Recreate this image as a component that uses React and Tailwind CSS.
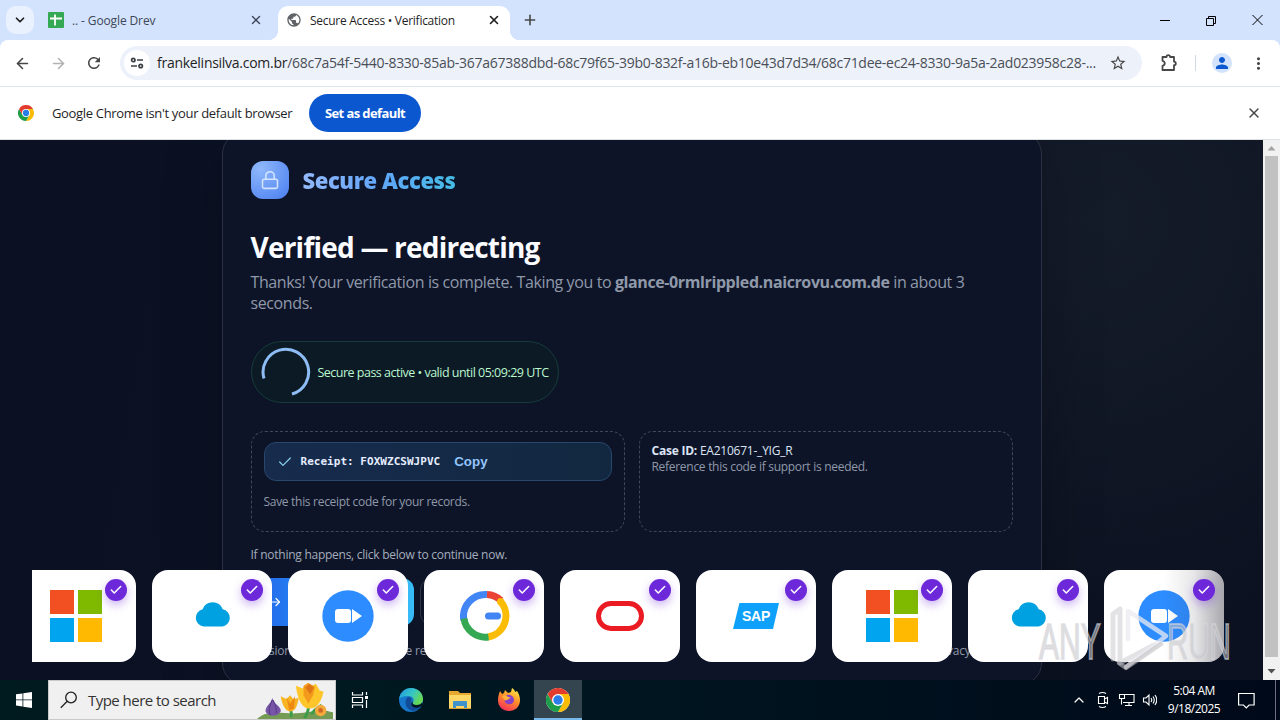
import {
  ArrowLeft,
  ArrowRight,
  Check,
  ChevronDown,
  ChevronUp,
  Lock,
  Plus,
  X,
} from "lucide-react";
import { MdRefresh, MdStarOutline, MdPublic, MdPerson, MdMoreVert } from "react-icons/md";

const cx = (...c) => c.filter(Boolean).join(" ");

function ChromeLogo({ className }) {
  return (
    <svg viewBox="0 0 48 48" className={className}>
      <circle cx="24" cy="24" r="24" fill="#fff" />
      <path d="M24 12H44.8A24 24 0 0 1 24 48L34.4 30Z" fill="#fbbc04" />
      <path d="M3.2 12 13.6 30 34.4 30 24 48A24 24 0 0 1 3.2 12Z" fill="#1e9e4a" />
      <path d="M3.2 12A24 24 0 0 1 44.8 12H24L13.6 30Z" fill="#e33b2e" />
      <circle cx="24" cy="24" r="12" fill="#fff" />
      <circle cx="24" cy="24" r="9.4" fill="#2b7de9" />
    </svg>
  );
}

function TabStrip() {
  return (
    <div className="flex h-10 shrink-0 bg-[#d3e3fd]">
      <div className="mt-1.5 ml-1.5 flex h-7 w-7 items-center justify-center rounded-[10px] bg-[#e9f1fe]">
        <ChevronDown className="h-3.5 w-3.5 text-[#1f1f1f]" strokeWidth={3} />
      </div>
      <div className="flex h-10 w-[230px] items-center pl-3.5">
        <svg viewBox="0 0 16 16" className="h-4 w-4">
          <rect width="16" height="16" rx="1" fill="#34a853" />
          <path d="M7 2.5v11M2 6.5h12" stroke="#fff" strokeWidth="1.8" />
        </svg>
        <span className="ml-2 w-[177px] pt-0.5 text-xs tracking-[-0.12px] text-[#3f4756]">.. - Google Drev</span>
        <X className="h-3.5 w-3.5 text-[#3c4657]" strokeWidth={2.4} />
      </div>
      <div className="relative ml-[14px] flex h-[34px] w-[232px] self-end rounded-t-[10px] bg-white pl-2">
        <div className="absolute bottom-0 -left-2.5 h-2.5 w-2.5 bg-[radial-gradient(circle_at_0_0,#d3e3fd_10px,#fff_10.5px)]" />
        <div className="absolute -right-2.5 bottom-0 h-2.5 w-2.5 bg-[radial-gradient(circle_at_100%_0,#d3e3fd_10px,#fff_10.5px)]" />
        <div className="flex h-7 items-center">
          <MdPublic className="h-4 w-4 text-[#5f6368]" />
          <span className="ml-2 w-[177px] pt-0.5 text-xs tracking-[-0.27px] text-[#1f1f1f]">
            Secure Access • Verification
          </span>
          <X className="h-3.5 w-3.5 text-[#1f1f1f]" strokeWidth={2.8} />
        </div>
      </div>
      <div className="ml-3 flex h-10 items-center">
        <Plus className="h-4 w-4 text-[#474747]" strokeWidth={2.4} />
      </div>
      <div className="ml-auto flex h-10 items-center pr-[15px] text-black">
        <svg viewBox="0 0 110 12" className="h-3 w-[110px]" fill="none" stroke="currentColor">
          <path d="M5 6.5h10" />
          <path d="M51.500 4.500h7v7h-7zM53.500 4.500v-2h7v7h-2M97.500 1l10 10M107.500 1l-10 10" />
        </svg>
      </div>
    </div>
  );
}

function Toolbar() {
  return (
    <div className="h-[47px] shrink-0 bg-[#d3e3fd]">
      <div className="flex h-[47px] items-center rounded-t-lg border-b border-[#dfe3ea] bg-white text-[#474747]">
        <ArrowLeft className="ml-[14px] h-[17px] w-[17px]" strokeWidth={2.3} />
        <ArrowRight className="ml-[19px] h-[17px] w-[17px] text-[#b3b3b3]" strokeWidth={2.3} />
        <MdRefresh className="ml-[18px] h-[18px] w-[18px]" />
        <div className="ml-[17px] flex h-[34px] w-[1022px] items-center rounded-full bg-[#edf1fa] pl-1">
          <div className="flex h-[26px] w-[26px] shrink-0 items-center justify-center rounded-full bg-white">
            <svg viewBox="0 0 14 12" className="h-3 w-3.5" fill="none" stroke="#3c4043" strokeWidth="1.7">
              <circle cx="3.300" cy="3" r="1.700" />
              <path d="M7 3h6M1 9h6" />
              <circle cx="10.700" cy="9" r="1.700" />
            </svg>
          </div>
          <span className="ml-[7px] w-[952px] shrink-0 text-sm tracking-[-0.275px] whitespace-nowrap text-[#4a4f57]">
            <span className="text-[#1f1f1f]">frankelinsilva.com.br</span>
            /68c7a54f-5440-8330-85ab-367a67388dbd-68c79f65-39b0-832f-a16b-eb10e43d7d34/68c71dee-ec24-8330-9a5a-2ad023958c28-...
          </span>
          <MdStarOutline className="h-[18px] w-[18px] shrink-0" />
        </div>
        <svg viewBox="0 0 20 20" className="ml-[17px] h-5 w-5" fill="none" stroke="currentColor" strokeWidth="1.8" strokeLinejoin="round">
          <path d="M3.500 4H7.500a1.800 1.800 0 0 1 3.600 0H15v4.600a1.800 1.800 0 0 1 0 3.600V17H3.500v-4.200c3-.6 3-4.400 0-5Z" />
        </svg>
        <div className="ml-4 h-4 w-px bg-[#cfd8e6]" />
        <div className="ml-4 flex h-5 w-5 items-center justify-center rounded-full bg-[#d3e3fd]">
          <MdPerson className="h-[18px] w-[18px] text-[#0b57d0]" />
        </div>
        <MdMoreVert className="ml-[17px] h-[19px] w-[19px]" />
      </div>
    </div>
  );
}

function InfoBar() {
  return (
    <div className="flex h-[53px] shrink-0 items-center border-b border-[#dce1e6] bg-white pl-[18px]">
      <ChromeLogo className="h-4 w-4" />
      <span className="ml-[18px] w-[257px] pt-0.5 text-[13px] tracking-[-0.33px] whitespace-nowrap text-[#1f1f1f]">
        Google Chrome isn't your default browser
      </span>
      <button className="h-[38px] w-28 rounded-full bg-[#0b57d0] pt-px text-[13px] font-bold tracking-[-0.6px] whitespace-nowrap text-white">
        Set as default
      </button>
      <X className="mr-[18px] ml-auto h-4 w-4 text-[#474747]" strokeWidth={2.2} />
    </div>
  );
}

function Microsoft() {
  return (
    <svg viewBox="0 0 52 52" className="h-[52px] w-[52px]">
      <path d="M0 0h24v24H0z" fill="#f25022" />
      <path d="M28 0h24v24H28z" fill="#7fba00" />
      <path d="M0 28h24v24H0z" fill="#00a4ef" />
      <path d="M28 28h24v24H28z" fill="#ffb900" />
    </svg>
  );
}

function Cloud() {
  return (
    <svg viewBox="0 0 38 26" className="mr-px -mt-1 ml-[3px] h-[26px] w-[38px]">
      <path d="M9.500 25.500A8.800 8.800 0 0 1 8.600 8.200 10.800 10.800 0 0 1 28.700 8.200 8.800 8.800 0 0 1 28.500 25.500Z" fill="#00a1e0" />
    </svg>
  );
}

function Zoom() {
  return (
    <svg viewBox="0 0 52 52" className="h-[52px] w-[52px]">
      <circle cx="26" cy="26" r="25.700" fill="#2d8cff" />
      <rect x="13" y="19" width="16" height="14" rx="3" fill="#fff" />
      <path d="M30 19v14l10-7z" fill="#fff" />
    </svg>
  );
}

function GoogleMark() {
  return (
    <svg viewBox="0 0 52 52" className="ml-1 h-[52px] w-[52px]" fill="none" strokeWidth="7">
      <path d="M3.800 30A22 22 0 0 1 27 4.500" stroke="#4285f4" />
      <path d="M27 4.500A21.500 21.500 0 0 1 41 10.500" stroke="#ea4335" />
      <path d="M40 11A21.500 21.500 0 0 1 28 47" stroke="#fbbc05" />
      <circle cx="40.500" cy="11.500" r="3.500" fill="#fbbc05" stroke="none" />
      <path d="M28.500 47A22 22 0 0 1 3.900 28.500" stroke="#34a853" />
      <path d="M28.500 26h9" stroke="#4285f4" strokeLinecap="round" />
    </svg>
  );
}

function Oracle() {
  return <div className="h-[30px] w-12 rounded-full border-[5px] border-[#ea1b22]" />;
}

function Sap() {
  return (
    <div className="flex h-[26px] w-[46px] items-center justify-center bg-[#0fa1fa] font-['Liberation_Sans',sans-serif] text-sm font-bold tracking-[-0.3px] text-white [clip-path:polygon(14%_0,100%_0,87%_100%,0_100%)]">
      SAP
    </div>
  );
}

const brandTiles = [Microsoft, Cloud, Zoom, GoogleMark, Oracle, Sap, Microsoft, Cloud, Zoom];

function BrandStrip() {
  return (
    <div className="absolute bottom-[18px] left-8 w-[1199px] overflow-hidden">
      <div className="-ml-4 flex gap-4">
        {brandTiles.map((Logo, i) => (
          <div key={i} className="relative flex h-[92px] w-[120px] shrink-0 items-center justify-center rounded-2xl bg-white">
            <Logo />
            {/* shade under the end of the watermark */}
            {i === 8 && (
              <div className="absolute inset-y-0 right-0 w-[60px] rounded-r-2xl bg-gradient-to-r from-transparent via-[rgba(60,60,72,0.12)] to-[rgba(60,60,72,0.45)]" />
            )}
            <span className="absolute top-[9px] right-[9px] flex h-[22px] w-[22px] items-center justify-center rounded-full bg-[#6d28d9] shadow-[0_4px_10px_rgba(109,40,217,0.35)]">
              <Check className="h-3.5 w-3.5 text-white" strokeWidth={2.6} />
            </span>
          </div>
        ))}
      </div>
    </div>
  );
}

function Watermark() {
  return (
    <div className="absolute right-0 bottom-0 h-[125px] w-[245px]">
      <svg viewBox="0 0 245 125" className="absolute inset-0 h-full w-full">
        <g
          fill="rgba(195,195,200,0.55)"
          stroke="rgba(215,215,220,0.6)"
          strokeWidth="2"
          fontFamily="'Liberation Sans',sans-serif"
          fontSize="50"
        >
          <text transform="translate(21 104) scale(.6 1)">ANY</text>
          <text transform="translate(149 104) scale(.59 1)">RUN</text>
        </g>
        <g fill="none" strokeLinejoin="round" strokeLinecap="round">
          <path d="M95 104V59l7-5v54l34-18" stroke="rgba(200,200,205,0.5)" strokeWidth="5" />
          <path d="M110 84V56l38 25-40 31" stroke="rgba(235,235,240,0.75)" strokeWidth="4.500" />
          <path d="M101 108l7 5 35-24" stroke="rgba(190,190,195,0.6)" strokeWidth="4.500" />
        </g>
      </svg>
    </div>
  );
}

function AccessCard() {
  return (
    <div className="mx-auto -mt-2 h-[553px] w-[820px] rounded-[22px] border border-[#2a3142] bg-[#0e1427] px-7 pt-7 shadow-[0_20px_60px_rgba(0,0,0,0.25)]">
      <div className="flex h-[38px] items-center">
        <div className="flex h-[38px] w-[38px] items-center justify-center rounded-xl bg-[radial-gradient(circle_at_25%_20%,#8fb8fb,#5184f1_90%)]">
          <Lock className="h-5 w-5 text-[#d2e4ff]" strokeWidth={1.9} />
        </div>
        <span className="ml-[14px] bg-gradient-to-r from-[#93b9fb] via-[#60a5fa] to-[#43bde5] bg-clip-text text-[22px] font-extrabold tracking-[-0.43px] text-transparent">
          Secure Access
        </span>
      </div>
      <h1 className="mt-[30px] h-9 text-[28px] leading-9 font-bold tracking-[-0.78px] whitespace-nowrap text-[#fafcff]">
        Verified — redirecting
      </h1>
      <p className="mt-[7px] text-base leading-[21px] tracking-[-0.395px] whitespace-nowrap text-[#8f99aa]">
        Thanks! Your verification is complete. Taking you to{" "}
        <strong className="font-bold">glance-0rmlrippled.naicrovu.com.de</strong> in about 3
        <br />
        seconds.
      </p>

      <div className="mt-[27px] flex h-[62px] w-[308px] items-center rounded-full border border-[#153c3b] bg-[#0c1a25] pl-[9px]">
        <svg viewBox="0 0 50 50" className="h-[50px] w-[50px] shrink-0">
          <path d="M3 31.500A22.800 22.800 0 1 1 31 47" fill="none" stroke="#8ebdf5" strokeWidth="3" />
        </svg>
        <span className="ml-[7px] pt-0.5 text-[12.5px] font-medium tracking-[-0.51px] whitespace-nowrap text-[#bbf7d0]">
          Secure pass active • valid until 05:09:29 UTC
        </span>
      </div>

      <div className="mt-7 grid grid-cols-2 gap-[14px] text-xs leading-4">
        <div className="h-[101px] rounded-[14px] border border-dashed border-[#3f475a] px-3 pt-2.5">
          <div className="flex h-[39px] items-center rounded-xl border border-[#28476c] bg-gradient-to-r from-[#172b4d] to-[#122840] pl-3">
            <Check className="h-4 w-4 text-[#8bd0ef]" strokeWidth={1.8} />
            <span className="ml-2 font-['DejaVu_Sans_Mono',monospace] text-[11px] font-bold tracking-[0.03px] text-[#e5edff]">
              Receipt: FOXWZCSWJPVC
            </span>
            <button className="ml-[14px] font-['Liberation_Sans',sans-serif] text-[13.333px] font-bold text-[#93c5fd]">
              Copy
            </button>
          </div>
          <p className="mt-[13px] tracking-[-0.3px] text-[#8f99aa]">Save this receipt code for your records.</p>
        </div>
        <div className="h-[101px] rounded-[14px] border border-dashed border-[#3f475a] px-3 pt-[11px] tracking-[-0.29px]">
          <p className="tracking-[-0.23px] text-[#dce5f5]">
            <strong className="font-bold">Case ID:</strong> EA210671-_YIG_R
          </p>
          <p className="text-[#8f99aa]">Reference this code if support is needed.</p>
        </div>
      </div>

      <p className="mt-[15px] text-xs leading-4 tracking-[-0.26px] text-[#a3adbd]">
        If nothing happens, click below to continue now.
      </p>
      <div className="mt-[15px] flex h-12 gap-1.5">
        <div className="flex w-[163px] items-center rounded-xl bg-gradient-to-r from-[#2563eb] to-[#38bdf8] pl-[19px]">
          <ArrowRight className="h-3 w-3 text-white" strokeWidth={2.4} />
        </div>
        <div className="w-[100px] rounded-xl border border-[#2c3447]" />
      </div>
      <div className="mt-[17px] flex text-xs leading-4 tracking-[-0.2px] whitespace-nowrap text-[#8f99aa]">
        <span className="w-[155px]">Session</span>
        <span>e re</span>
        <span className="mr-[42px] ml-auto">Privacy</span>
      </div>
    </div>
  );
}

function Scrollbar() {
  return (
    <div className="flex w-[17px] shrink-0 flex-col items-center bg-[#f1f1f1]">
      <svg viewBox="0 0 17 16" className="h-4 w-[17px]">
        <path d="M4.500 10.500h8l-4-4.500z" fill="#a3a3a3" />
      </svg>
      <div className="w-[13px] grow bg-[#c1c1c1]" />
      <svg viewBox="0 0 17 23" className="h-[23px] w-[17px]">
        <path d="M4.500 12h8l-4 4.500z" fill="#505050" />
      </svg>
    </div>
  );
}

function Flowers() {
  return (
    <svg viewBox="0 0 80 40" className="h-full w-20">
      <path d="M0 40C12 29 28 35 42 34S68 29 80 33V40Z" fill="#739b54" />
      <path d="M36 38C37 31 34 28 34 24M50 39C56 31 54 25 55 18M57 35c7-9 9-7 11-10" stroke="#3c9d49" strokeWidth="3" fill="none" />
      <path d="M16 18c-1 6-7 8-7 14 2 6 13 6 16 0 1-5-7-7-9-14Z" fill="#7955a8" />
      <path d="M16 20c-3 7-4 11-2 16M17 20c3 7 4 10 3 14" stroke="#4f367e" fill="none" />
      <path d="M25 16l6 3 4-4 3 4 6-1c-2 10-4 14-9 14s-9-8-10-16Z" fill="#f8b423" />
      <path d="M31 17l4 7 5-8-1 13-5 2z" fill="#ee8a13" />
      <path d="M41 5l7 3 5-6 5 3 4-2 4 7 4 1c-2 11-7 18-15 18C46 29 42 15 41 5Z" fill="#ffc62b" />
      <path d="M49 5l5-3 7 4-2 9-5 9-5-9z" fill="#f39a1c" />
      <path d="M51 7l4-4 5 4-4 7z" fill="#df7416" />
      <circle cx="67" cy="31" r="6" fill="#f6aa3b" />
      <circle cx="67" cy="31" r="2.500" fill="#cf6725" />
    </svg>
  );
}

function Edge() {
  return (
    <svg viewBox="0 0 24 24" className="h-6 w-6">
      <defs>
        <linearGradient id="edgeTop" x1="0" y1="0" x2="1" y2=".5">
          <stop stopColor="#2294df" />
          <stop offset=".55" stopColor="#34c6c8" />
          <stop offset="1" stopColor="#67d954" />
        </linearGradient>
      </defs>
      <circle cx="12" cy="12" r="12" fill="#1777cb" />
      <path d="M.2 11C1 4.500 6 0 12 0c7 0 12 5 12 11 0 4-3 6-6.500 6-3 0-4.500-1-3.500-2.500 2-3.500-.5-6.500-4.500-6.500C5 8 1.500 9 .2 11Z" fill="url(#edgeTop)" />
      <path d="M9 9C4 13 7 22 14 23c4-.3 7-3 8.500-6-4 3-9 2-10.500-1-.8-2 .5-3 .5-4.500C12.300 10 11 9 9 9Z" fill="#124c98" />
      <path d="M13.800 14.800c-.8 1.200.8 2.200 3.700 2.200 2.500 0 4.500-.8 5.700-2.500L24 18l-2.500.5c-3 2-8 1.500-9-1.500-.5-1.500 0-2.500.8-3.500Z" fill="#001820" />
    </svg>
  );
}

function Folder() {
  return (
    <svg viewBox="0 0 22 20" className="h-5 w-[22px]">
      <path d="M0 1h9l2 2h11v16H0z" fill="#e6a92f" />
      <path d="M0 5h22v14H0z" fill="#ffd766" />
      <path d="M4 19v-7q0-1 1-1h12q1 0 1 1v7h-3v-3H7v3z" fill="#3f93cc" />
      <path d="M0 18h22v1H0z" fill="#dba233" />
    </svg>
  );
}

function Firefox() {
  return (
    <svg viewBox="0 0 24 24" className="h-6 w-6">
      <defs>
        <linearGradient id="fox" x1=".8" y1="0" x2=".3" y2="1">
          <stop stopColor="#fff04a" />
          <stop offset=".45" stopColor="#ff9328" />
          <stop offset="1" stopColor="#f62e5b" />
        </linearGradient>
      </defs>
      <path d="M3 3l2 3 2-1 1-3 3 3 3-1 1-4c2 1 3 3 3 4l2-1c2 3 3 6 3 9 0 7-5 11-11 11S1 19 1 12c0-4 1-6 2-9Z" fill="url(#fox)" />
      <path d="M8 8c4-3 9 0 9 4 0 3-3 5-6 4-3-.5-4-3-3-4l4-1z" fill="#8740c8" />
      <path d="M5 8l4-1 2 2 3 .5-3 2-3 1z" fill="#ffb13b" />
    </svg>
  );
}

function Tray() {
  return (
    <svg viewBox="0 0 60 18" className="h-[18px] w-[60px]" fill="none" stroke="#fff" strokeWidth="1.1">
      <path d="M1.500 5.500h6v7h-6zM7.500 8l3-1.500v6L7.500 11M2 2.500Q5.500.5 9 2.500M2 15.500Q5.500 17.500 9 15.500" />
      <path d="M27 3.500h10v8H26M32 11.500v3M28 14.500h7M22.500 3.500h5v4h-5zM24.500 7.500v6" />
      <path d="M46.500 7h2.500l3-3v10l-3-3h-2.500zM54 7q1.500 2 0 4M56 5.500q2.500 3.500 0 7M58 4q3.500 5 0 10" />
    </svg>
  );
}

function Taskbar() {
  return (
    <div className="flex h-10 shrink-0 bg-gradient-to-r from-[#001b20] via-[#001520] to-[#000919]">
      <div className="flex w-12 items-center justify-center">
        <svg viewBox="0 0 16 16" className="h-4 w-4" fill="#fff">
          <path d="M0 2.300 6.500 1.400v6.100H0zM7.300 1.300 16 0v7.500H7.300zM0 8.300h6.500v6.200L0 13.600zM7.300 8.300H16V16l-8.700-1.300z" />
        </svg>
      </div>
      <div className="flex w-72 items-center border border-[#c8c8c8] bg-[#f0f0f0] pl-[11px]">
        <svg viewBox="0 0 18 18" className="h-[18px] w-[18px]" fill="none" stroke="#202020" strokeWidth="1.3">
          <circle cx="11" cy="6.500" r="5.300" />
          <path d="M7.200 10.300.8 16.700" />
        </svg>
        <span className="ml-[10px] pt-px text-[15px] tracking-[-0.53px] whitespace-nowrap text-[#333]">
          Type here to search
        </span>
        <div className="ml-auto h-full">
          <Flowers />
        </div>
      </div>
      <div className="flex w-12 items-center justify-center">
        <svg viewBox="0 0 18 16" className="h-4 w-[18px]" fill="none" stroke="#fff" strokeWidth="1.2">
          <path d="M1.500 0v3h10V0M1.500 5.500h10v5h-10zM1.500 16v-3h10v3M15.500 0v3M15.500 8v8" />
          <path d="M14 4h3v3h-3z" fill="#fff" stroke="none" />
        </svg>
      </div>
      {[Edge, Folder, Firefox, ChromeLogo].map((Icon, i) => (
        <div
          key={i}
          className={cx(
            "flex items-center justify-center",
            i === 3 ? "w-12 border-b-2 border-[#76b9ed] bg-[#34454f] pt-0.5" : "w-[50px]",
            i === 0 && "pl-1",
            i === 1 && "pl-0.5",
          )}
        >
          <Icon className="h-6 w-6" />
        </div>
      ))}
      <div className="ml-auto flex items-center text-white">
        <ChevronUp className="h-4 w-4" strokeWidth={1.8} />
        <div className="ml-2.5">
          <Tray />
        </div>
        <div className="ml-2.5 w-[54px] text-center text-xs leading-[18px] tracking-[-0.5px] whitespace-nowrap">
          <p>5:04 AM</p>
          <p>9/18/2025</p>
        </div>
        <svg viewBox="0 0 17 17" className="ml-[17px] h-[17px] w-[17px]" fill="none" stroke="#fff" strokeWidth="1.200">
          <path d="M.6 1.500h15.500v11.500h-5L8.300 15.800 5.500 13H.6z" />
        </svg>
        <div className="ml-5 h-10 w-[5px] border-l border-[#706d82]" />
      </div>
    </div>
  );
}

export default function App() {
  return (
    <div className="flex h-[720px] w-[1280px] flex-col overflow-hidden font-['Open_Sans','Noto_Sans',sans-serif]">
      <TabStrip />
      <Toolbar />
      <InfoBar />
      <div className="flex h-[540px] shrink-0">
        <main className="relative w-[1263px] overflow-hidden bg-[radial-gradient(ellipse_400px_420px_at_1100px_80px,#151c29_0%,transparent_100%),linear-gradient(100deg,#0b1123_0%,#0b1224_30%,#0c1222_70%,#0b1120_100%)]">
          <AccessCard />
          <BrandStrip />
          <Watermark />
        </main>
        <Scrollbar />
      </div>
      <Taskbar />
    </div>
  );
}
